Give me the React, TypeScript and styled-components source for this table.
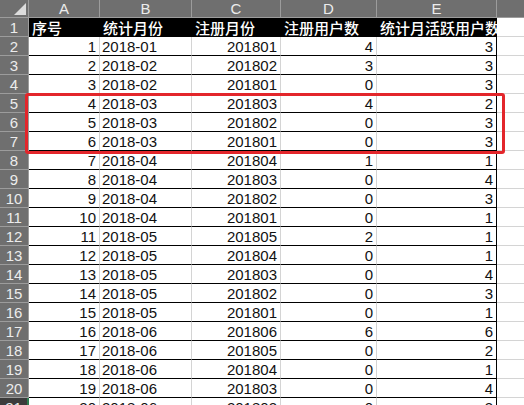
import React from "react";
import styled, { createGlobalStyle } from "styled-components";

const Global = createGlobalStyle`
  html, body { margin: 0; padding: 0; background: #ffffff; overflow: hidden; }
  body { font-family: "Liberation Sans", "Noto Sans CJK SC", sans-serif; }
`;

const Wrap = styled.div`
  position: relative;
  width: 524px;
  height: 405px;
  overflow: hidden;
`;

const Grid = styled.div`
  display: grid;
  grid-template-columns: 29px 71px 92px 89px 96px 120px 40px;
  grid-template-rows: 18px repeat(21, 19px);
`;

const Corner = styled.div`
  position: relative;
  background: #6f6f6f;
  border-right: 1px solid #9c9c9c;
  border-bottom: 1px solid #9c9c9c;
  box-sizing: border-box;
  &::after {
    content: "";
    position: absolute;
    right: 2px;
    bottom: 2px;
    width: 0;
    height: 0;
    border-left: 12px solid transparent;
    border-bottom: 12px solid #dcdcdc;
  }
`;

const ColHead = styled.div`
  background: #6f6f6f;
  color: #ececec;
  border-right: 1px solid #9c9c9c;
  border-bottom: 1px solid #9c9c9c;
  box-sizing: border-box;
  font-size: 15px;
  line-height: 18px;
  text-align: center;
`;

const RowHead = styled.div<{ $sel?: boolean }>`
  background: ${(p) => (p.$sel ? "#3c3c3c" : "#6f6f6f")};
  color: #ececec;
  border-right: ${(p) => (p.$sel ? "2px solid #2e7d4f" : "1px solid #9c9c9c")};
  border-bottom: 1px solid #9c9c9c;
  box-sizing: border-box;
  font-size: 15px;
  line-height: 19px;
  text-align: center;
`;

const Title = styled.div`
  background: #000000;
  color: #ffffff;
  font-family: "Noto Sans CJK SC", sans-serif;
  font-weight: 500;
  font-size: 15px;
  line-height: 19px;
  padding-left: 3px;
  white-space: nowrap;
  overflow: hidden;
  box-sizing: border-box;
  border-bottom: 1px solid #000000;
`;

const Cell = styled.div<{ $right?: boolean; $last?: boolean }>`
  background: #ffffff;
  color: #111111;
  font-size: 15px;
  line-height: 19px;
  text-align: ${(p) => (p.$right ? "right" : "left")};
  padding: ${(p) => (p.$right ? "0 3px 0 0" : "0 0 0 2px")};
  border-bottom: 1px solid #000000;
  border-right: 1px solid ${(p) => (p.$last ? "#000000" : "#d4d4d4")};
  box-sizing: border-box;
  white-space: nowrap;
  overflow: hidden;
`;

const Empty = styled.div`
  background: #ffffff;
  border-bottom: 1px solid #d4d4d4;
  border-right: 1px solid #d4d4d4;
  box-sizing: border-box;
`;

const Highlight = styled.div`
  position: absolute;
  left: 25px;
  top: 93px;
  width: 480px;
  height: 61px;
  border: 3px solid #e3262b;
  border-radius: 3px;
  box-sizing: border-box;
  pointer-events: none;
`;

const headers = ["序号", "统计月份", "注册月份", "注册用户数", "统计月活跃用户数"];

const rows: [number, string, string, number, number][] = [
  [1, "2018-01", "201801", 4, 3],
  [2, "2018-02", "201802", 3, 3],
  [3, "2018-02", "201801", 0, 3],
  [4, "2018-03", "201803", 4, 2],
  [5, "2018-03", "201802", 0, 3],
  [6, "2018-03", "201801", 0, 3],
  [7, "2018-04", "201804", 1, 1],
  [8, "2018-04", "201803", 0, 4],
  [9, "2018-04", "201802", 0, 3],
  [10, "2018-04", "201801", 0, 1],
  [11, "2018-05", "201805", 2, 1],
  [12, "2018-05", "201804", 0, 1],
  [13, "2018-05", "201803", 0, 4],
  [14, "2018-05", "201802", 0, 3],
  [15, "2018-05", "201801", 0, 1],
  [16, "2018-06", "201806", 6, 6],
  [17, "2018-06", "201805", 0, 2],
  [18, "2018-06", "201804", 0, 1],
  [19, "2018-06", "201803", 0, 4],
  [20, "2018-06", "201802", 0, 3],
];

export default function App() {
  return (
    <Wrap>
      <Global />
      <Grid>
        <Corner />
        {["A", "B", "C", "D", "E", ""].map((c, i) => (
          <ColHead key={i}>{c}</ColHead>
        ))}
        <RowHead>1</RowHead>
        {headers.map((h) => (
          <Title key={h}>{h}</Title>
        ))}
        <Empty />
        {rows.map((r, i) => (
          <React.Fragment key={i}>
            <RowHead $sel={i === 19}>{i + 2}</RowHead>
            <Cell $right>{r[0]}</Cell>
            <Cell>{r[1]}</Cell>
            <Cell $right>{r[2]}</Cell>
            <Cell $right>{r[3]}</Cell>
            <Cell $right $last>
              {r[4]}
            </Cell>
            <Empty />
          </React.Fragment>
        ))}
      </Grid>
      <Highlight />
    </Wrap>
  );
}
